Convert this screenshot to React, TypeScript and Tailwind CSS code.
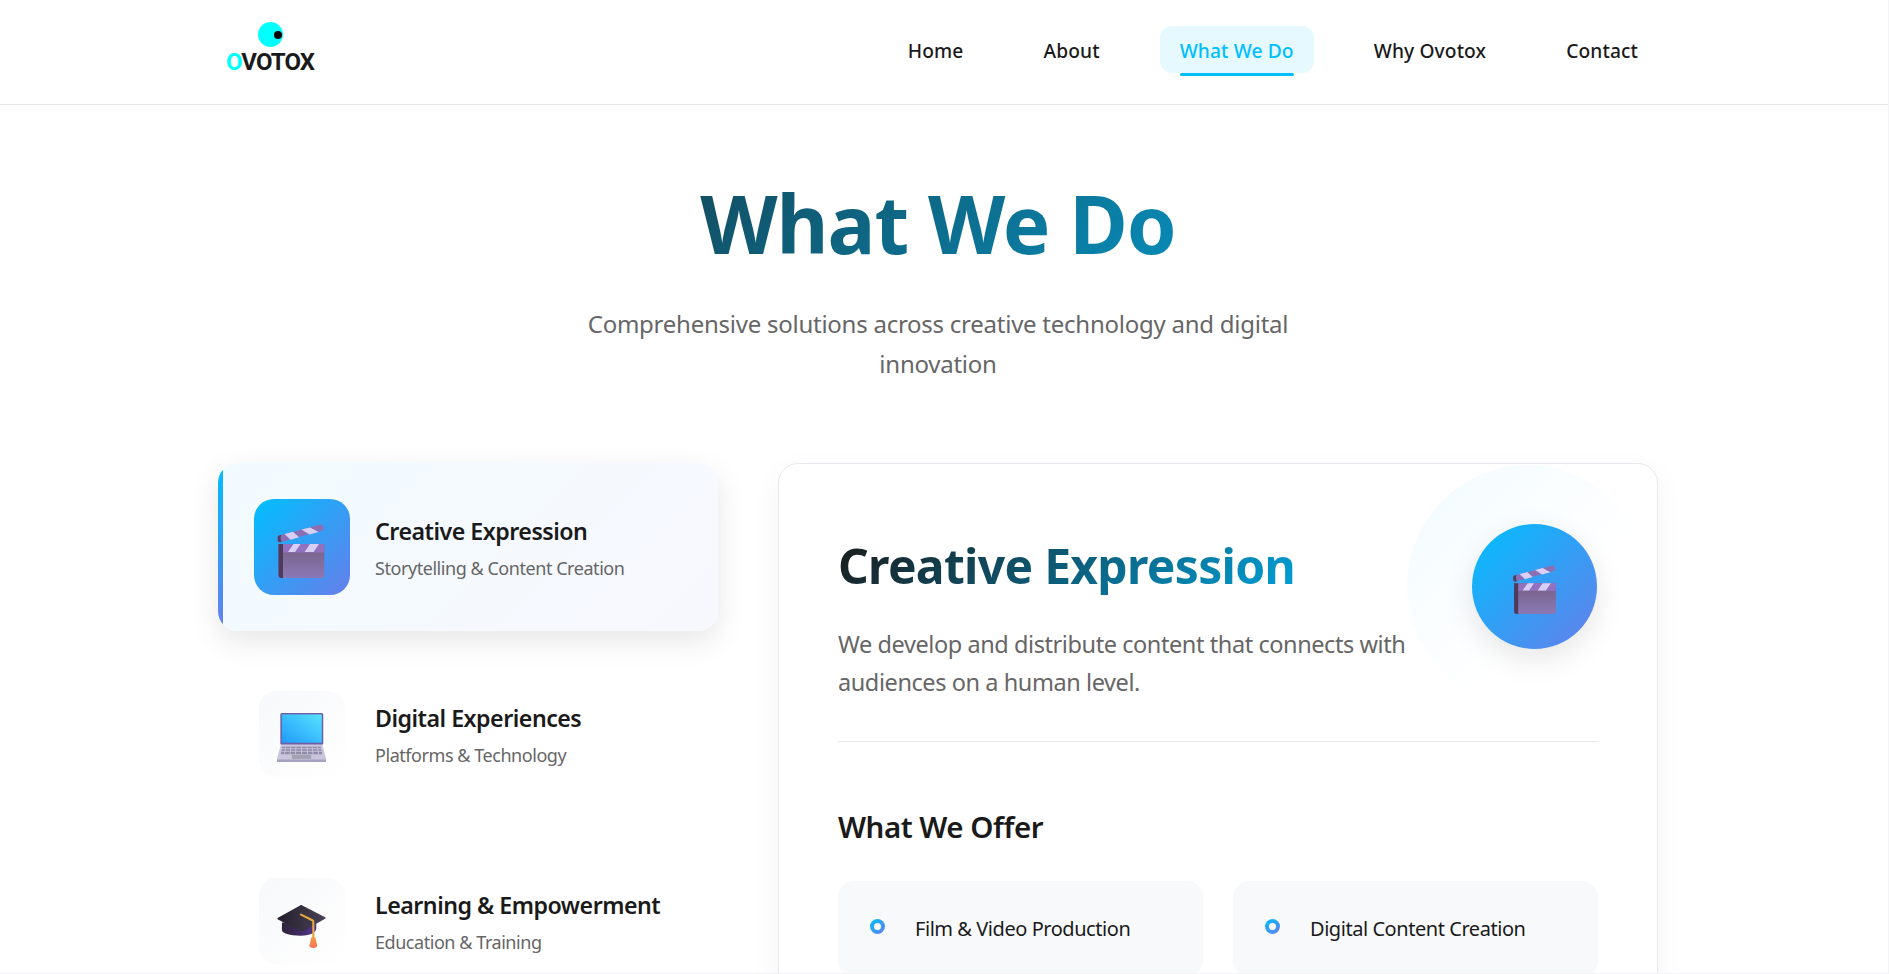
import React from "react";

function Clapper({ className }: { className?: string }) {
  return (
    <svg viewBox="0 0 47 54" className={className}>
      <defs>
        <linearGradient id="clapBody" x1="0" y1="0" x2="0" y2="1">
          <stop offset="0" stopColor="#76607f" />
          <stop offset="1" stopColor="#8a78b6" />
        </linearGradient>
      </defs>
      <path d="M1.5 11.5 43 .6c1.3-.3 2 .2 2.4 1.2L46.6 6 3 18.2c-1.6.4-3-.6-3-2.2v-2.2c0-1.2.5-2 1.5-2.3Z" fill="#8a6fb5" />
      <path d="M1.5 11.5 4 10.8c-1.5 1.5-1 4.6 0 7.2l-1 .2c-1.6.4-3-.6-3-2.2v-2.2c0-1.2.5-2 1.5-2.3Z" fill="#4f3d63" />
      <path d="M7 10 15.5 7.800 21.500 13.300 13 15.700Z M24 5.600 32.500 3.400 41 8 32 10.500Z" fill="#d8cff7" />
      <rect x="1" y="20" width="46" height="34" rx="3" fill="url(#clapBody)" />
      <rect x="1" y="20" width="46" height="8.500" fill="#9272c0" />
      <path d="M10.500 28 16 20h7l-5.500 8Z M27 28 32.500 20h9L36 28Z" fill="#d8cff7" />
      <path d="M1 20h4.500v34H4a3 3 0 0 1-3-3Z" fill="#4c3b5c" />
    </svg>
  );
}

function Laptop({ className }: { className?: string }) {
  return (
    <svg viewBox="0 0 49 49" className={className}>
      <defs>
        <linearGradient id="lapScreen" x1="0" y1="1" x2="1" y2="0">
          <stop offset="0" stopColor="#1f9bfa" />
          <stop offset="1" stopColor="#57e2ff" />
        </linearGradient>
      </defs>
      <rect x="3.500" y="0.500" width="42.500" height="31.500" rx="1.500" fill="#6c5fa6" />
      <rect x="5" y="2" width="39.500" height="28" fill="url(#lapScreen)" />
      <path d="M4 32h41l4 14.500H0Z" fill="#cbc5de" />
      <path d="M5.500 34h38l1.500 7.500H4Z" fill="#8f8ca6" />
      <path d="M5 36h39.500M4.500 38.500h40.500M9 34l-1.500 7.500M14 34l-1 7.500M19 34l-.5 7.500M24.500 34v7.500M30 34l.5 7.500M35 34l1 7.500M40 34l1.500 7.500" stroke="#cbc5de" strokeWidth="0.900" />
      <rect x="15" y="42" width="19" height="4" fill="#a3a1b4" />
      <path d="M0 46.500h49V49H0Z" fill="#a6a0bf" />
    </svg>
  );
}

function Cap({ className }: { className?: string }) {
  return (
    <svg viewBox="0 0 50 44" className={className}>
      <defs>
        <linearGradient id="capTop" x1="0" y1="0" x2="1" y2="0">
          <stop offset="0" stopColor="#241f2c" />
          <stop offset="1" stopColor="#4a4256" />
        </linearGradient>
        <linearGradient id="capBase" x1="0" y1="0" x2="1" y2="0">
          <stop offset="0" stopColor="#2c2238" />
          <stop offset="1" stopColor="#53368c" />
        </linearGradient>
        <linearGradient id="tassel" x1="0" y1="0" x2="0" y2="1">
          <stop offset="0" stopColor="#f0a040" />
          <stop offset="1" stopColor="#f76e5a" />
        </linearGradient>
      </defs>
      <path d="M5 18v8c0 3 8 5.500 19 5.500S40 28 40 24v-7Z" fill="url(#capBase)" />
      <path d="M1 13.300 23.500.6c.8-.4 1.600-.4 2.300 0L49 12.600c.7.400.7 1.300 0 1.700L26.500 26.800c-.8.400-1.700.4-2.500 0L1 15c-.7-.4-.7-1.300 0-1.700Z" fill="url(#capTop)" />
      <path d="M24.500 10 36 15.800c.6.300 1 1 1 1.700V34" fill="none" stroke="#e3a93f" strokeWidth="2.200" strokeLinecap="round" />
      <path d="M35 33h4l2 8.500c0 1.500-1.500 2.500-4 2.500s-4-1-4-2.500Z" fill="url(#tassel)" />
    </svg>
  );
}

function Dot() {
  return (
    <span className="flex h-[15px] w-[15px] shrink-0 -translate-y-[2px] items-center justify-center rounded-full bg-[linear-gradient(135deg,#00bfff,#667eea)]">
      <span className="h-[7px] w-[7px] rounded-full bg-[#f8f9fa]" />
    </span>
  );
}

const navItems = ["Home", "About", "What We Do", "Why Ovotox", "Contact"];

function Row({ title, sub, children }: { title: string; sub: string; children: React.ReactNode }) {
  return (
    <div className="flex h-[168px] items-center gap-[25px] rounded-[20px] px-[36px]">
      <div className="flex h-[96px] w-[96px] shrink-0 scale-90 items-center justify-center rounded-[20px] bg-[linear-gradient(135deg,#f7f8fa,#ffffff)]">
        {children}
      </div>
      <div>
        <div className="text-[23.200px] font-semibold leading-[34px] tracking-[-0.5px]">{title}</div>
        <div className="mt-[7px] text-[18px] leading-[26px] tracking-[-0.45px] text-[#666666]">{sub}</div>
      </div>
    </div>
  );
}

export default function App() {
  return (
    <div className="h-[974px] overflow-hidden border-b border-r border-[#f4f4f6] bg-white font-['Noto_Sans',sans-serif] text-[#1a1a1a]">
      <header className="h-[105px] border-b border-[#e5e7eb]">
        <div className="ml-[218px] flex h-[104px] w-[1440px] items-start justify-between pl-[8px]">
          <div className="mt-[22px] flex w-[88px] flex-col items-center">
            <div className="relative h-[25px] w-[25px] rounded-full bg-[#00ffff]">
              <span className="absolute left-[16px] top-[8.700px] h-[8px] w-[8px] rounded-full bg-black" />
            </div>
            <div className="mt-[2.500px] whitespace-nowrap font-['Roboto',sans-serif] text-[24px] font-bold leading-[24px] tracking-[-0.9px]">
              <span className="text-[#00ffff]">O</span>VOTOX
            </div>
          </div>
          <nav className="mt-[26px] flex items-center gap-[40px]">
            {navItems.map((n) =>
              n === "What We Do" ? (
                <a key={n} className="relative flex h-[47px] items-center rounded-[12px] bg-[#e5f9ff] px-[20px] pt-[4px] text-[19.200px] font-medium tracking-[0.12px] text-[#00bfff]">
                  {n}
                  <span className="absolute bottom-[-3px] left-[20px] right-[20px] h-[3px] rounded-[2px] bg-[#00bfff]" />
                </a>
              ) : (
                <a key={n} className="flex h-[47px] items-center px-[20px] pt-[4px] text-[19.200px] font-medium tracking-[0.12px] text-[#1a1a1a]">
                  {n}
                </a>
              )
            )}
          </nav>
        </div>
      </header>

      <main className="ml-[218px] w-[1440px]">
        <h1 className="mt-[70px] bg-[linear-gradient(135deg,#1a1a1a,#00bfff)] bg-clip-text text-center text-[80px] font-bold leading-[96px] tracking-[-1px] text-transparent">
          What We Do
        </h1>
        <p className="mx-auto mt-[33px] w-[720px] text-center text-[24px] leading-[40px] tracking-[-0.25px] text-[#666666]">
          Comprehensive solutions across creative technology and digital innovation
        </p>

        <div className="mt-[79px] flex items-start gap-[60px]">
          <aside className="flex w-[500px] shrink-0 flex-col gap-[19.200px]">
            <div className="relative flex h-[168px] items-center gap-[25px] overflow-hidden rounded-[20px] bg-[linear-gradient(135deg,#f2fbff,#f7f8fe)] px-[36px] shadow-[0_10px_30px_rgba(0,0,0,0.1)]">
              <span className="absolute bottom-0 left-0 top-0 w-[5px] bg-[linear-gradient(180deg,#00bfff,#667eea)]" />
              <div className="flex h-[96px] w-[96px] shrink-0 items-center justify-center rounded-[20px] bg-[linear-gradient(135deg,#00bfff,#667eea)]">
                <Clapper className="h-[54px] w-[47px] -translate-x-[1.500px] translate-y-[4px]" />
              </div>
              <div>
                <div className="text-[23.200px] font-semibold leading-[34px] tracking-[-0.5px]">Creative Expression</div>
                <div className="mt-[7px] text-[18px] leading-[26px] tracking-[-0.45px] text-[#666666]">Storytelling &amp; Content Creation</div>
              </div>
            </div>
            <Row title="Digital Experiences" sub="Platforms & Technology">
              <Laptop className="h-[55px] w-[55px] -translate-x-[1px] translate-y-[3px]" />
            </Row>
            <Row title="Learning & Empowerment" sub="Education & Training">
              <Cap className="h-[48px] w-[55px] -translate-x-[1px] translate-y-[6px]" />
            </Row>
          </aside>

          <section className="relative w-[880px] shrink-0 overflow-hidden rounded-[20px] border border-[#e8e8ee] bg-white px-[59px] pb-[60px] pt-[59px] shadow-[0_10px_30px_rgba(0,0,0,0.05)]">
            <div className="absolute left-[628px] top-[1px] h-[242px] w-[242px] rounded-full bg-[linear-gradient(135deg,#f2fbff,#ffffff_62%)]" />
            <div className="relative flex items-start justify-between border-b border-[#e8e8ee] pb-[39px]">
              <div className="w-[600px]">
                <h2 className="mt-[14px] w-fit bg-[linear-gradient(135deg,#1a1a1a,#00a0d8)] bg-clip-text text-[48px] font-bold leading-[58px] tracking-[-0.7px] text-transparent">
                  Creative Expression
                </h2>
                <p className="mt-[30px] w-[600px] text-[23.500px] leading-[38.400px] tracking-[-0.42px] text-[#666666]">
                  We develop and distribute content that connects with audiences on a human level.
                </p>
              </div>
              <div className="mr-[1px] mt-[1px] flex h-[125px] w-[125px] shrink-0 items-center justify-center rounded-full bg-[linear-gradient(135deg,#00bfff,#667eea)] shadow-[0_10px_30px_rgba(0,0,0,0.1)]">
                <Clapper className="h-[49px] w-[43px] translate-y-[3px]" />
              </div>
            </div>
            <h3 className="mt-[65px] text-[29.500px] font-semibold leading-[40px] tracking-[-0.5px]">What We Offer</h3>
            <div className="mt-[34px] grid grid-cols-2 gap-[30px]">
              {["Film & Video Production", "Digital Content Creation"].map((t) => (
                <div key={t} className="flex h-[96px] items-center gap-[30px] rounded-[16px] bg-[#f8f9fa] pl-[32px]">
                  <Dot />
                  <span className="text-[20px] tracking-[-0.45px]">{t}</span>
                </div>
              ))}
            </div>
          </section>
        </div>
      </main>
    </div>
  );
}
